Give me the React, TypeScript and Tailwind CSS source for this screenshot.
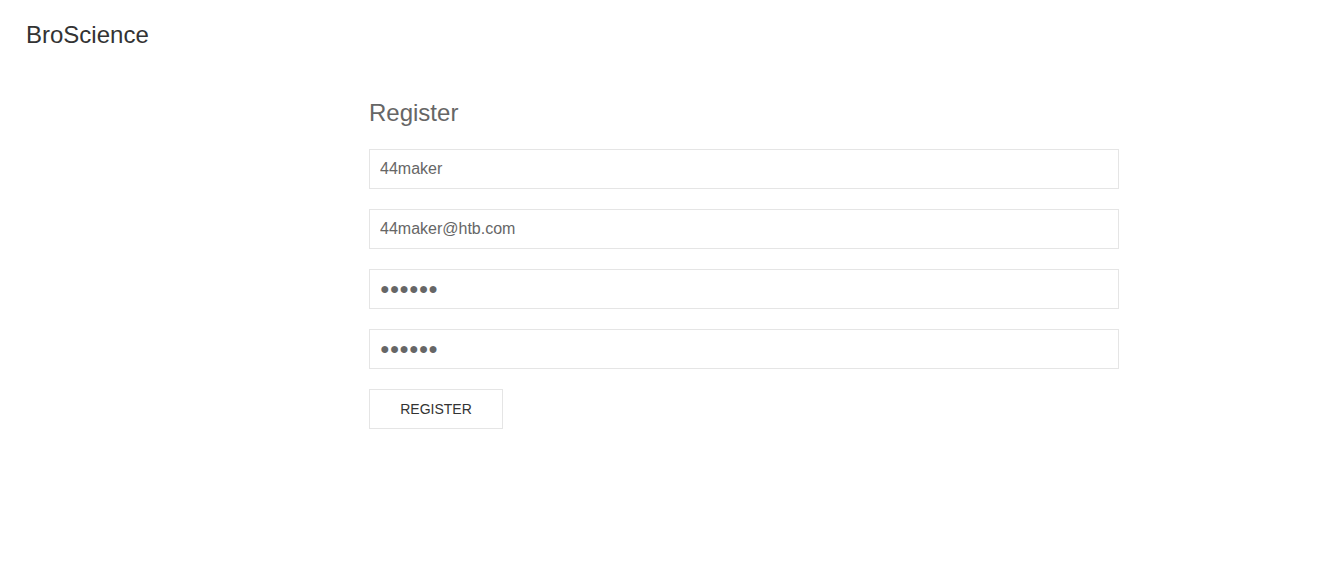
const fields = [
  { type: "text", value: "44maker" },
  { type: "email", value: "44maker@htb.com" },
  { type: "text", value: "●●●●●●" },
  { type: "text", value: "●●●●●●" }
];

export default function App() {
  return (
    <div className="min-h-[564px] bg-white font-['Liberation_Sans',Arial,sans-serif]">
      <header className="px-[26px] pt-[21px]">
        <a href="#" className="text-[24px] leading-[1.2] text-[#333]">
          BroScience
        </a>
      </header>
      <main className="ml-[369px] mt-[49px] w-[750px]">
        <h2 className="text-[24px] leading-[1.2] text-[#666]">Register</h2>
        <form className="mt-[21px] flex flex-col gap-[20px]" onSubmit={(e) => e.preventDefault()}>
          {fields.map((f, i) => (
            <input
              key={i}
              type={f.type}
              defaultValue={f.value}
              className="h-[40px] w-full border border-[#e5e5e5] bg-white px-[10px] text-[16px] text-[#666] outline-none"
            />
          ))}
          <div>
            <button
              type="submit"
              className="h-[40px] w-[134px] border border-[#e5e5e5] bg-white pt-px text-[14px] uppercase text-[#333]"
            >
              Register
            </button>
          </div>
        </form>
      </main>
    </div>
  );
}
